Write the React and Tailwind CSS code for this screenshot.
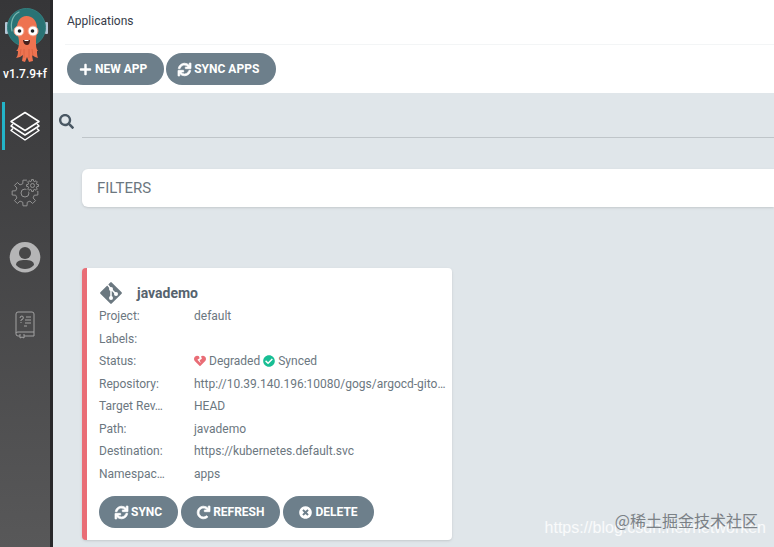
import React from 'react';
import { FaPlus, FaSync, FaSearch, FaRedo, FaTimesCircle, FaCheckCircle, FaHeartBroken } from 'react-icons/fa';

const Logo = () => (
    <svg viewBox="0 0 48 64" className="w-12 h-16" aria-label="Argo">
        <rect x="4" y="22" width="3" height="12" rx="1" fill="#b4c6d6" />
        <rect x="44" y="22" width="3" height="12" rx="1" fill="#b4c6d6" />
        <circle cx="25.5" cy="27.5" r="19" fill="#2a7375" stroke="#347f7f" strokeWidth="1" />
        <path d="M11 31C9 22 12 15 18 12" fill="none" stroke="#79b5ae" strokeWidth="1.2" strokeLinecap="round" />
        <path
            d="M25.5 16c-6 0-9.5 5-9.5 12 0 7 2 9 2 14 0 4-1 8-3 9h2c0 4-1 6-2 7l4-1 3-2-1 6 3 1 2-5 2 5 4-1-1-6 3 2 3 1c-1-2-1-5-1-7h1c-2-2-2-5-2-9 0-5 1-7 1-14 0-7-4-12-10.5-12z"
            fill="#ee7350"
        />
        <path d="M20 49l-1 7M23 49v9M28 49v9M31 49l1 7" stroke="#d6603f" strokeWidth="0.8" />
        <circle cx="18" cy="31" r="5" fill="#fff" stroke="#f29a7f" strokeWidth="1" />
        <circle cx="32" cy="31" r="5" fill="#fff" stroke="#f29a7f" strokeWidth="1" />
        <circle cx="18.5" cy="31" r="1.8" fill="#1b2024" />
        <circle cx="31.5" cy="31" r="1.8" fill="#1b2024" />
        <path d="M22 40h7c0 3-1 5-3 5s-4-2-4-5z" fill="#47211d" />
        <path d="M23.5 40h4v1h-4z" fill="#fff" />
    </svg>
);

const LayersIcon = () => (
    <svg viewBox="0 0 32 32" className="size-8" fill="none" stroke="#fff" strokeWidth="1.5" strokeLinejoin="round">
        <path d="M16 2.5l14 9-14 9-14-9z" />
        <path d="M4 14l-2 2 14 9 14-9-2-2" />
        <path d="M4 18.5l-2 2 14 9.5 14-9.5-2-2" />
    </svg>
);

const gear = (cx, cy, outer, inner, teeth) => {
    const points = [];
    for (let i = 0; i < teeth; i++) {
        [[-0.3, inner], [-0.2, outer], [0.2, outer], [0.3, inner]].forEach(([offset, r]) => {
            const angle = ((i + offset) / teeth) * Math.PI * 2 + Math.PI / 2;
            points.push(`${(cx + r * Math.cos(angle)).toFixed(2)},${(cy + r * Math.sin(angle)).toFixed(2)}`);
        });
    }
    return points.join(' ');
};

const GearsIcon = () => (
    <svg viewBox="0 0 32 32" className="size-8" fill="none" stroke="#929292" strokeWidth="1" strokeLinejoin="round">
        <polygon points={gear(16, 17, 13, 9.5, 8)} />
        <circle cx="16" cy="17" r="4" />
        <circle cx="23.5" cy="9.5" r="7.5" fill="#424243" stroke="none" />
        <polygon points={gear(23.5, 9.5, 6, 4.5, 8)} />
        <circle cx="23.5" cy="9.5" r="2" />
    </svg>
);

const UserIcon = () => (
    <svg viewBox="0 0 32 32" className="size-8">
        <circle cx="16" cy="15.3" r="15.3" fill="#b5b5b6" />
        <circle cx="16" cy="11" r="6" fill="#474748" />
        <path d="M7 23c0-4 4-5 9-5s9 1 9 5c-3 3-6 4-9 4s-6-1-9-4z" fill="#474748" />
    </svg>
);

const DocsIcon = () => (
    <svg viewBox="0 0 32 32" className="size-8" fill="none" stroke="#a2a2a2" strokeWidth="1">
        <path d="M11 28H9a2 2 0 0 1-2-2V6q0-2 2-2h14q2 0 2 2v22H15M7 25q0-1 2-1h16" />
        <path d="M11 26v4l2-1 2 1v-4" />
        <path d="M11 10q0-2 2-2t1 3l-2 1v1M12 14v1" />
        <path d="M17 9h5M16 12h6M16 15h6M15 18h3" />
    </svg>
);

const GitIcon = () => (
    <svg viewBox="0 0 24 24" className="size-6">
        <rect x="4" y="4" width="16" height="16" rx="1" transform="rotate(45 12 12)" fill="#6b7880" />
        <path d="M8 3l4 5v9M12 8l5 5" stroke="#fff" strokeWidth="1.5" fill="none" />
        <circle cx="12" cy="8" r="2" fill="#fff" />
        <circle cx="12" cy="17" r="2" fill="#fff" />
        <circle cx="17" cy="13" r="2" fill="#fff" />
    </svg>
);

const navItems = [
    { label: 'Applications', icon: LayersIcon, active: true },
    { label: 'Settings', icon: GearsIcon },
    { label: 'User info', icon: UserIcon },
    { label: 'Documentation', icon: DocsIcon },
];

const details = [
    ['Project:', 'default'],
    ['Labels:', ''],
    [
        'Status:',
        <span className="flex items-center gap-[3px]">
            <FaHeartBroken size={12} className="text-[#e96d76]" /> Degraded
            <FaCheckCircle size={12} className="text-[#18be94]" /> Synced
        </span>,
    ],
    ['Repository:', 'http://10.39.140.196:10080/gogs/argocd-gito…'],
    ['Target Rev…', 'HEAD'],
    ['Path:', 'javademo'],
    ['Destination:', 'https://kubernetes.default.svc'],
    ['Namespac…', 'apps'],
];

// the arrow icons are thin at this size, so they get a stroke on top of the fill
const SyncIcon = () => <FaSync size={13} className="overflow-visible stroke-white stroke-[28px]" />;
const RefreshIcon = () => <FaRedo size={13} className="overflow-visible stroke-white stroke-[28px]" />;
const PlusIcon = () => <FaPlus size={13} />;
const DeleteIcon = () => <FaTimesCircle size={13} />;

const Button = ({ icon: Icon, className, children }) => (
    <button
        type="button"
        className={`flex h-8 items-center gap-[3px] rounded-full bg-[#6d7f8b] text-[12px] font-bold text-white whitespace-nowrap ${className}`}
    >
        <Icon />
        {children}
    </button>
);

const Sidebar = () => (
    <nav className="w-[53px] shrink-0 border-r-3 border-[#29292b] bg-linear-to-b from-[#363638] to-[#585859]">
        <div className="flex h-[86px] flex-col items-center">
            <Logo />
            <div className="text-[12px] leading-5 font-medium text-white">v1.7.9+f</div>
        </div>
        <ul className="mt-4 flex flex-col gap-[18px]">
            {navItems.map(({ label, icon: Icon, active }) => (
                <li key={label} className="pl-[2px]">
                    <a
                        href="#"
                        aria-label={label}
                        className={`flex h-12 items-center border-l-3 pl-1 ${active ? 'border-[#23b4c8]' : 'border-transparent'}`}
                    >
                        <Icon />
                    </a>
                </li>
            ))}
        </ul>
    </nav>
);

const AppCard = () => (
    <article className="w-[370px] rounded border-l-5 border-[#e96d76] bg-white pt-[13px] pb-3 pl-3 shadow-sm">
        <div className="flex items-center gap-[14px]">
            <GitIcon />
            <h2 className="text-[14px] font-bold text-[#56636e]">javademo</h2>
        </div>
        <dl className="grid h-[180px] grid-cols-1 grid-rows-8 text-[12px] text-[#6c777f]">
            {details.map(([label, value]) => (
                <div key={label} className="flex min-w-0 items-center">
                    <dt className="w-[95px] shrink-0">{label}</dt>
                    <dd className="min-w-0 whitespace-nowrap">{value}</dd>
                </div>
            ))}
        </dl>
        <div className="mt-[11px] flex gap-[3px]">
            <Button icon={SyncIcon} className="px-4">SYNC</Button>
            <Button icon={RefreshIcon} className="px-4">REFRESH</Button>
            <Button icon={DeleteIcon} className="px-4">DELETE</Button>
        </div>
    </article>
);

const App = () => {
    return (
        <div className="relative flex min-h-screen overflow-hidden bg-[#e0e6ea] font-[Roboto,sans-serif]">
            <Sidebar />
            <div className="min-w-0 flex-1">
                <header className="bg-white">
                    <h1 className="ml-[14px] flex h-11 items-center pb-[2px] text-[12px] text-[#363c4a]">Applications</h1>
                    <div className="ml-3 flex gap-[2px] border-t border-[#f3f5f6] py-2 pl-[2px]">
                        <Button icon={PlusIcon} className="pr-[17px] pl-3">NEW APP</Button>
                        <Button icon={SyncIcon} className="pr-[17px] pl-3">SYNC APPS</Button>
                    </div>
                </header>
                <main className="pt-3">
                    <div className="flex items-center pl-[6px]">
                        <label htmlFor="search" aria-label="Search applications">
                            <FaSearch size={15} className="text-[#495763]" />
                        </label>
                        <input id="search" type="text" className="ml-2 h-[33px] min-w-0 flex-1 border-b border-[#bfc5c9] outline-none" />
                    </div>
                    <div className="pt-[31px] pl-[29px]">
                        <section className="flex h-[38px] items-center rounded-l-md bg-white pl-[15px] text-[15px] text-[#6c777f] shadow">
                            FILTERS
                        </section>
                        <div className="mt-[61px]">
                            <AppCard />
                        </div>
                    </div>
                </main>
            </div>
            <div className="pointer-events-none absolute right-2 bottom-[7px] font-['Liberation_Sans',sans-serif] text-[16px] leading-6 text-white/80">
                https://blog.csdn.net/networken
            </div>
            <div className="pointer-events-none absolute right-4 bottom-[15px] font-['Noto_Sans_CJK_SC',sans-serif] text-[16px] leading-6 text-[#7b8186]">
                @稀土掘金技术社区
            </div>
        </div>
    );
};

export default App;
